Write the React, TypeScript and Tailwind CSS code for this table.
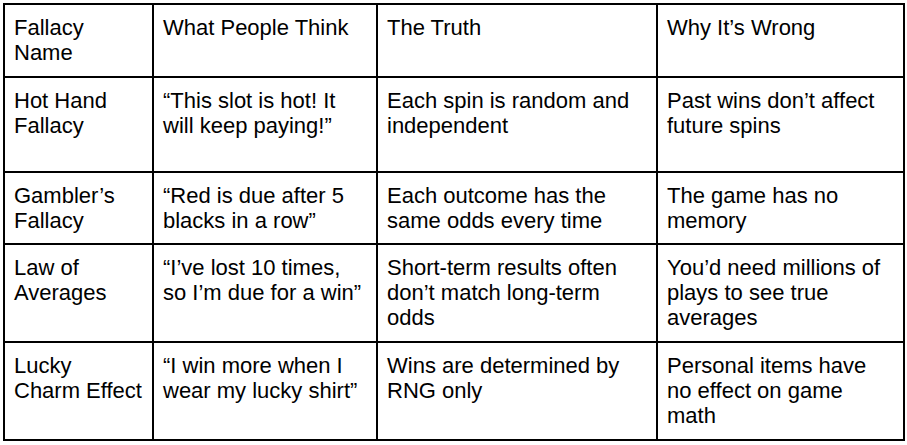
const rows = [
  {
    h: 'h-[95px]',
    cells: ['Hot Hand Fallacy', '“This slot is hot! It will keep paying!”', 'Each spin is random and independent', 'Past wins don’t affect future spins'],
  },
  {
    h: 'h-[72px]',
    cells: ['Gambler’s Fallacy', '“Red is due after 5 blacks in a row”', 'Each outcome has the same odds every time', 'The game has no memory'],
  },
  {
    h: 'h-[98px]',
    cells: ['Law of Averages', '“I’ve lost 10 times, so I’m due for a win”', 'Short-term results often don’t match long-term odds', 'You’d need millions of plays to see true averages'],
  },
  {
    h: 'h-[98px]',
    cells: ['Lucky Charm Effect', '“I win more when I wear my lucky shirt”', 'Wins are determined by RNG only', 'Personal items have no effect on game math'],
  },
]

const header = ['Fallacy Name', 'What People Think', 'The Truth', 'Why It’s Wrong']

export default function App() {
  return (
    <div className="min-h-screen w-full bg-white pl-[3px] pt-[3px] font-['Liberation_Sans',Arial,sans-serif] text-[22px] leading-[25px] text-black">
      <table className="table-fixed border-collapse border-2 border-black w-[902px]">
        <colgroup>
          <col className="w-[149px]" />
          <col className="w-[224px]" />
          <col className="w-[280px]" />
          <col className="w-[247px]" />
        </colgroup>
        <thead>
          <tr className="h-[73px]">
            {header.map((t) => (
              <th key={t} className="border-2 border-black px-[9px] py-[10px] text-left align-top font-normal">
                {t}
              </th>
            ))}
          </tr>
        </thead>
        <tbody>
          {rows.map((r) => (
            <tr key={r.cells[0]} className={r.h}>
              {r.cells.map((c) => (
                <td key={c} className="border-2 border-black px-[9px] py-[10px] align-top">
                  {c}
                </td>
              ))}
            </tr>
          ))}
        </tbody>
      </table>
    </div>
  )
}
